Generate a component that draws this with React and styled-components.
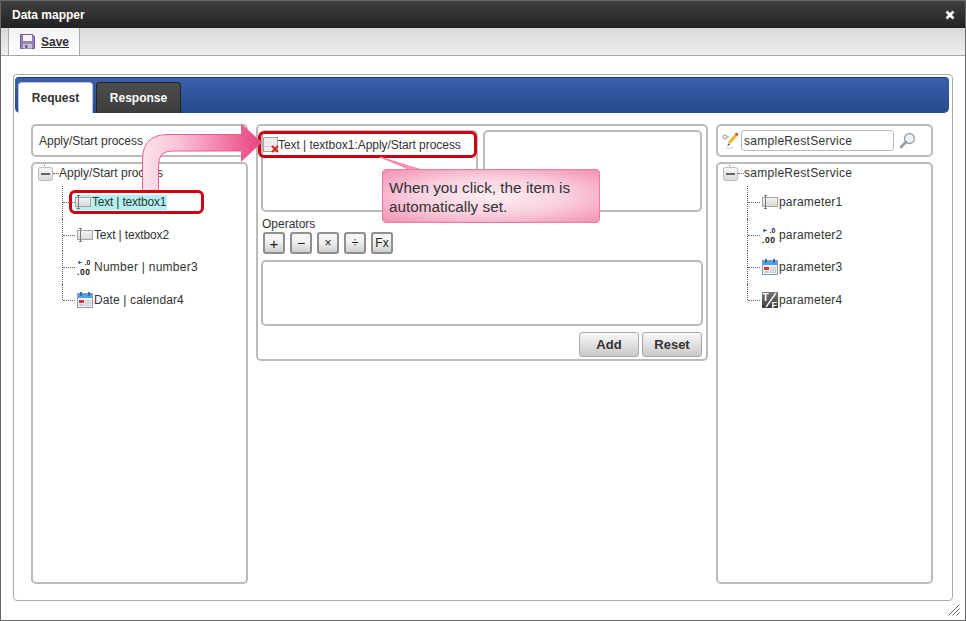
import styled, { createGlobalStyle } from "styled-components";

const GlobalStyle = createGlobalStyle`
  html, body {
    margin: 0;
    padding: 0;
    height: 100%;
    background: #fff;
    overflow: hidden;
  }
  * {
    box-sizing: border-box;
  }
`;

const Window = styled.div`
  position: relative;
  width: 966px;
  height: 621px;
  display: flex;
  flex-direction: column;
  background: #fff;
  border-left: 1px solid #666;
  border-right: 1px solid #666;
  border-bottom: 1px solid #666;
  font-family: "Liberation Sans", Arial, sans-serif;
  font-size: 12px;
  color: #333;
`;

const TitleBar = styled.div`
  height: 28px;
  flex: none;
  display: flex;
  align-items: center;
  justify-content: space-between;
  padding: 1px 10px 0 11px;
  background: linear-gradient(#6a6a6a 0, #6a6a6a 1px, #3f3f3f 1px, #222 100%);
  color: #fff;
  font-weight: bold;
`;

const Toolbar = styled.div`
  height: 28px;
  flex: none;
  display: flex;
  padding-left: 7px;
  background: linear-gradient(#d9d9d9, #efefef);
  border-bottom: 1px solid #a8a8a8;
`;

const SaveTab = styled.div`
  width: 72px;
  display: flex;
  align-items: center;
  gap: 6px;
  padding-left: 11px;
  background: linear-gradient(#f2f2f2, #fff);
  border-left: 1px solid #aaa;
  border-right: 1px solid #aaa;
  font-weight: bold;
  text-decoration: underline;
`;

const Panel = styled.div`
  flex: 1;
  min-height: 0;
  display: flex;
  flex-direction: column;
  margin: 18px 12px 19px 12px;
  padding: 2px 3px 0 1px;
  border: 1px solid #aaa;
  border-radius: 4px;
`;

const TabBar = styled.div`
  height: 36px;
  flex: none;
  display: flex;
  align-items: flex-end;
  gap: 3px;
  padding-left: 3px;
  border-top: 1px solid #1c3a78;
  border-radius: 4px 4px 5px 5px;
  background: linear-gradient(#3a60ab, #264a8b);
`;

const Tab = styled.div`
  width: ${(p) => p.$width}px;
  height: 31px;
  display: flex;
  align-items: center;
  justify-content: center;
  font-weight: bold;
  border-radius: 4px 4px 0 0;
  border: 1px solid ${(p) => (p.$active ? "#b9c4d8" : "#222")};
  border-bottom: none;
  background: ${(p) => (p.$active ? "#fff" : "linear-gradient(#4c4c4c, #3d3d3d)")};
  color: ${(p) => (p.$active ? "#333" : "#fff")};
`;

const Columns = styled.div`
  flex: 1;
  min-height: 0;
  display: grid;
  grid-template-columns: 217px 452px 217px;
  column-gap: 8px;
  margin: 11px 0 16px 16px;
`;

const SideColumn = styled.div`
  display: flex;
  flex-direction: column;
  gap: 5px;
  min-height: 0;
`;

const Box = styled.div`
  border: 2px solid #bbb;
  border-radius: 5px;
  background: #fff;
`;

const HeadBox = styled(Box)`
  height: 33px;
  flex: none;
  display: flex;
  align-items: center;
  padding-left: 6px;
`;

const SearchBox = styled(HeadBox)`
  padding-left: 4px;
  gap: 2px;
`;

const SearchInput = styled.div`
  width: 153px;
  height: 21px;
  margin-right: 3px;
  display: flex;
  align-items: center;
  padding-left: 2px;
  border: 1px solid #bbb;
  border-radius: 3px;
  letter-spacing: 0.28px;
`;

const TreeBox = styled(Box)`
  flex: 1;
  padding: 1px 5px;
`;

const RootRow = styled.div`
  display: flex;
  align-items: center;
  height: 16px;
`;

const RootLine = styled.span`
  width: 6px;
  border-top: 1px dotted #666;
`;

const Label = styled.span`
  letter-spacing: ${(p) => p.$track || 0}px;
`;

const TreeList = styled.div`
  margin: 5px 0 0 24px;
`;

const Row = styled.div`
  position: relative;
  height: 32.5px;
  display: flex;
  align-items: center;
`;

const Elbow = styled.span`
  position: relative;
  flex: none;
  width: 13px;
  align-self: flex-start;
  height: ${(p) => (p.$last ? "16px" : "32.5px")};
  border-left: 1px dotted #666;

  &::after {
    content: "";
    position: absolute;
    left: 0;
    top: 16px;
    width: 12px;
    border-top: 1px dotted #666;
  }
`;

const Item = styled.div`
  display: flex;
  align-items: center;
  gap: 1px;
  height: 15px;
  padding: 0 ${(p) => (p.$selected ? "1px" : "0")} 0 ${(p) => (p.$selected ? "0" : "2px")};
  background: ${(p) => (p.$selected ? "#b4f2f2" : "transparent")};
  white-space: nowrap;
`;

const MiddleColumn = styled(Box)`
  align-self: start;
  height: 237px;
  padding: 4px 3px 2px 3px;
  display: flex;
  flex-direction: column;
`;

const Slots = styled.div`
  display: grid;
  grid-template-columns: 217px 219px;
  column-gap: 5px;
`;

const Slot = styled(Box)`
  height: 82px;
  padding: 4px 0 0 0;
`;

const Chip = styled.div`
  display: flex;
  align-items: center;
  height: 18px;
  white-space: nowrap;

  svg {
    margin-right: -1px;
  }
`;

const OperatorLabel = styled.div`
  height: 14px;
  line-height: 14px;
  margin: 5px 0 1px 1px;
`;

const OperatorRow = styled.div`
  display: flex;
  gap: 5px;
  margin-left: 2px;
`;

const OperatorButton = styled.div`
  width: 22px;
  height: 22px;
  display: flex;
  align-items: center;
  justify-content: center;
  border: 2px solid #8f8f8f;
  border-radius: 3px;
  background: linear-gradient(#f8f8f8 0, #f0f0f0 45%, #d0d0d0 100%);
  color: #222;
  font-size: ${(p) => p.$size || 12}px;
`;

const Formula = styled(Box)`
  height: 66px;
  margin-top: 6px;
  flex: none;
`;

const Actions = styled.div`
  display: flex;
  justify-content: flex-end;
  gap: 3px;
  margin: 6px 1px 0 0;
`;

const ActionButton = styled.div`
  width: 60px;
  height: 25px;
  display: flex;
  align-items: center;
  justify-content: center;
  border: 1px solid #aaa;
  border-radius: 3px;
  background: linear-gradient(#f8f8f8, #c9c9c9);
  font-size: 13px;
  font-weight: bold;
`;

const Highlight = styled.div`
  position: absolute;
  left: ${(p) => p.$left}px;
  top: ${(p) => p.$top}px;
  width: ${(p) => p.$width}px;
  height: ${(p) => p.$height}px;
  border: 3px solid #d00010;
  border-radius: 6px;
`;

const ArrowLayer = styled.svg`
  position: absolute;
  left: -1px;
  top: 0;
  width: 966px;
  height: 621px;
  pointer-events: none;
`;

const Callout = styled.div`
  position: absolute;
  left: 381px;
  top: 169px;
  width: 218px;
  height: 54px;
  padding: 8px 0 0 6px;
  border: 1px solid #f07aa4;
  border-radius: 4px;
  background: radial-gradient(ellipse at center, #fdeef3 0%, #f9cfdf 50%, #f490b4 100%);
  font-size: 15.3px;
  line-height: 19px;
  color: #333;
`;

const Grip = styled.svg`
  position: absolute;
  right: 5px;
  bottom: 4px;
  width: 12px;
  height: 12px;
`;

const CloseIcon = () => (
  <svg width="10" height="10" viewBox="0 0 10 10">
    <path d="M1.5 1.5l7 7M8.5 1.5l-7 7" stroke="#fff" strokeWidth="2.6" />
  </svg>
);

const SaveIcon = () => (
  <svg width="15" height="15" viewBox="0 0 15 15">
    <path d="M0.5 0.5h12l2 2v12h-14z" fill="#9a7fc0" stroke="#6f5a96" />
    <rect x="3" y="1" width="9" height="6" fill="#f4f2f8" />
    <rect x="3" y="10" width="9" height="4.5" fill="#c9c4d2" />
    <rect x="5" y="11" width="2.5" height="3" fill="#6a6478" />
  </svg>
);

const MinusBox = () => (
  <svg width="15" height="16" viewBox="0 0 15 16" style={{ flex: "none" }}>
    <defs>
      <linearGradient id="minusFill" x1="0" y1="0" x2="0" y2="1">
        <stop offset="0" stopColor="#fafafa" />
        <stop offset="1" stopColor="#d8d8d8" />
      </linearGradient>
    </defs>
    <rect x="0.5" y="2.5" width="14" height="13" rx="2" fill="url(#minusFill)" stroke="#bbb" />
    <rect x="3" y="8" width="9" height="2" fill="#666" />
    <path d="M6.5 0v2" stroke="#666" strokeDasharray="1 1" />
  </svg>
);

const TextboxIcon = () => (
  <svg width="16" height="16" viewBox="0 0 16 16" style={{ flex: "none" }}>
    <defs>
      <linearGradient id="boxFill" x1="0" y1="0" x2="0" y2="1">
        <stop offset="0" stopColor="#f4f4f4" />
        <stop offset="1" stopColor="#d8d8d8" />
      </linearGradient>
    </defs>
    <rect x="0.5" y="3.5" width="15" height="9" fill="url(#boxFill)" stroke="#a5a5a5" />
    <path d="M2 1.5h3M2 14.5h3M3.5 1.5v13" stroke="#777" fill="none" />
  </svg>
);

const MappedIcon = () => (
  <svg width="16" height="16" viewBox="0 0 16 16" style={{ flex: "none" }}>
    <rect x="0.5" y="0.5" width="14" height="14" fill="#ececec" stroke="#a5a5a5" />
    <path d="M1 9.5h9" stroke="#ccc" />
    <path d="M9 9l6 6M15 9l-6 6" stroke="#e0201c" strokeWidth="2" />
  </svg>
);

const NumberIcon = () => (
  <svg width="16" height="16" viewBox="0 0 16 16" style={{ flex: "none" }}>
    <path d="M1 3.5h4M1 3.5l2-1.5M1 3.5l2 1.5" stroke="#2b5fb8" fill="none" />
    <text x="7.5" y="6" fontFamily="Liberation Sans" fontSize="7" fontWeight="bold" fill="#222">.0</text>
    <text x="0" y="15.5" fontFamily="Liberation Sans" fontSize="8.5" fontWeight="bold" letterSpacing="0.6" fill="#111">.00</text>
  </svg>
);

const CalendarIcon = () => (
  <svg width="16" height="16" viewBox="0 0 16 16" style={{ flex: "none" }}>
    <rect x="0.5" y="1.5" width="15" height="14" fill="#f2f2f2" stroke="#8d9aa8" />
    <rect x="1" y="2" width="14" height="4" fill="#4aa3ec" />
    <rect x="3" y="0" width="2" height="4" fill="#3a6f9f" />
    <rect x="11" y="0" width="2" height="4" fill="#3a6f9f" />
    <rect x="2" y="8" width="5" height="3" fill="#d9343a" />
    <path d="M8.5 8.5h5v5h-5zM2.5 12.5h4v1h-4zM11 8v6M8 11h6" fill="none" stroke="#c4ccd4" />
  </svg>
);

const BoolIcon = () => (
  <svg width="16" height="16" viewBox="0 0 16 16" style={{ flex: "none" }}>
    <defs>
      <linearGradient id="boolFill" x1="0" y1="0" x2="0" y2="1">
        <stop offset="0" stopColor="#777" />
        <stop offset="1" stopColor="#3a3a3a" />
      </linearGradient>
    </defs>
    <rect width="16" height="16" fill="url(#boolFill)" />
    <path d="M14 1L4 15" stroke="#fff" strokeWidth="1.3" />
    <text x="0.5" y="9" fontFamily="Liberation Sans" fontSize="10" fontWeight="bold" fill="#fff">T</text>
    <text x="9.5" y="15.5" fontFamily="Liberation Sans" fontSize="9" fontWeight="bold" fill="#fff">F</text>
  </svg>
);

const WandIcon = () => (
  <svg width="17" height="17" viewBox="0 0 17 17" style={{ flex: "none" }}>
    <circle cx="3" cy="5" r="2" fill="#f4f4f4" stroke="#999" />
    <path d="M5 5h2" stroke="#999" />
    <path d="M15 2L7 11" stroke="#e8b82a" strokeWidth="3" />
    <path d="M15.5 1.5l-1.5 1.5" stroke="#d8433a" strokeWidth="3" />
    <path d="M7 11l-2 3 3-1z" fill="#555" />
    <path d="M3 16h8" stroke="#ccc" />
  </svg>
);

const LensIcon = () => (
  <svg width="17" height="17" viewBox="0 0 17 17" style={{ flex: "none" }}>
    <circle cx="10.5" cy="6.5" r="5" fill="#eef2f5" stroke="#9aa0a6" strokeWidth="1.3" />
    <path d="M7 10l-5 5" stroke="#9a9a9a" strokeWidth="2.6" strokeLinecap="round" />
  </svg>
);

const leftItems = [
  { icon: <TextboxIcon />, label: "Text | textbox1", selected: true, track: -0.2 },
  { icon: <TextboxIcon />, label: "Text | textbox2", track: -0.15 },
  { icon: <NumberIcon />, label: "Number | number3", track: 0.25 },
  { icon: <CalendarIcon />, label: "Date | calendar4", track: 0.13 },
];

const rightItems = [
  { icon: <TextboxIcon />, label: "parameter1", track: 0.2 },
  { icon: <NumberIcon />, label: "parameter2", track: 0.2 },
  { icon: <CalendarIcon />, label: "parameter3", track: 0.2 },
  { icon: <BoolIcon />, label: "parameter4", track: 0.2 },
];

const Tree = ({ root, rootTrack, items }) => (
  <TreeBox>
    <RootRow>
      <MinusBox />
      <RootLine />
      <Label $track={rootTrack}>{root}</Label>
    </RootRow>
    <TreeList>
      {items.map((item, i) => (
        <Row key={item.label}>
          <Elbow $last={i === items.length - 1} />
          <Item $selected={item.selected}>
            {item.icon}
            <Label $track={item.track}>{item.label}</Label>
          </Item>
        </Row>
      ))}
    </TreeList>
  </TreeBox>
);

const operators = [
  { text: "+", size: 15 },
  { text: "−", size: 14 },
  { text: "×", size: 12 },
  { text: "÷", size: 12 },
  { text: "Fx", size: 12 },
];

export default function App() {
  return (
    <Window>
      <GlobalStyle />
      <TitleBar>
        Data mapper
        <CloseIcon />
      </TitleBar>
      <Toolbar>
        <SaveTab>
          <SaveIcon />
          Save
        </SaveTab>
      </Toolbar>
      <Panel>
        <TabBar>
          <Tab $active $width={75}>Request</Tab>
          <Tab $width={85}>Response</Tab>
        </TabBar>
        <Columns>
          <SideColumn>
            <HeadBox>Apply/Start process</HeadBox>
            <Tree root="Apply/Start process" items={leftItems} />
          </SideColumn>
          <MiddleColumn>
            <Slots>
              <Slot>
                <Chip>
                  <MappedIcon />
                  <Label $track={-0.05}>Text | textbox1:Apply/Start process</Label>
                </Chip>
              </Slot>
              <Slot />
            </Slots>
            <OperatorLabel>Operators</OperatorLabel>
            <OperatorRow>
              {operators.map((op) => (
                <OperatorButton key={op.text} $size={op.size}>{op.text}</OperatorButton>
              ))}
            </OperatorRow>
            <Formula />
            <Actions>
              <ActionButton>Add</ActionButton>
              <ActionButton>Reset</ActionButton>
            </Actions>
          </MiddleColumn>
          <SideColumn>
            <SearchBox>
              <WandIcon />
              <SearchInput>sampleRestService</SearchInput>
              <LensIcon />
            </SearchBox>
            <Tree root="sampleRestService" rootTrack={0.28} items={rightItems} />
          </SideColumn>
        </Columns>
      </Panel>

      <Highlight $left={68} $top={190} $width={135} $height={24} />
      <Highlight $left={257} $top={131} $width={219} $height={27} />

      <ArrowLayer viewBox="0 0 966 621">
        <defs>
          <linearGradient id="arrowFill" gradientUnits="userSpaceOnUse" x1="142" y1="0" x2="262" y2="0">
            <stop offset="0" stopColor="#fde3ec" />
            <stop offset="0.3" stopColor="#f9c4d8" />
            <stop offset="1" stopColor="#e9417f" />
          </linearGradient>
        </defs>
        <path
          d="M142.5 190V160Q142.5 134.5 168 134.5H241.5V124.5L261.5 142.5L241.5 161V151H172Q158.5 151 158.5 165V190"
          fill="url(#arrowFill)"
          stroke="#ee5a92"
        />
        <path d="M380 157L420 169.5H410z" fill="#f59bbb" stroke="#f07aa4" />
      </ArrowLayer>

      <Callout>
        When you click, the item is
        <br />
        automatically set.
      </Callout>

      <Grip viewBox="0 0 12 12">
        <path d="M0.5 11.5L11.5 0.5M4.5 11.5L11.5 4.5M8.5 11.5L11.5 8.5" stroke="#666" fill="none" />
      </Grip>
    </Window>
  );
}
